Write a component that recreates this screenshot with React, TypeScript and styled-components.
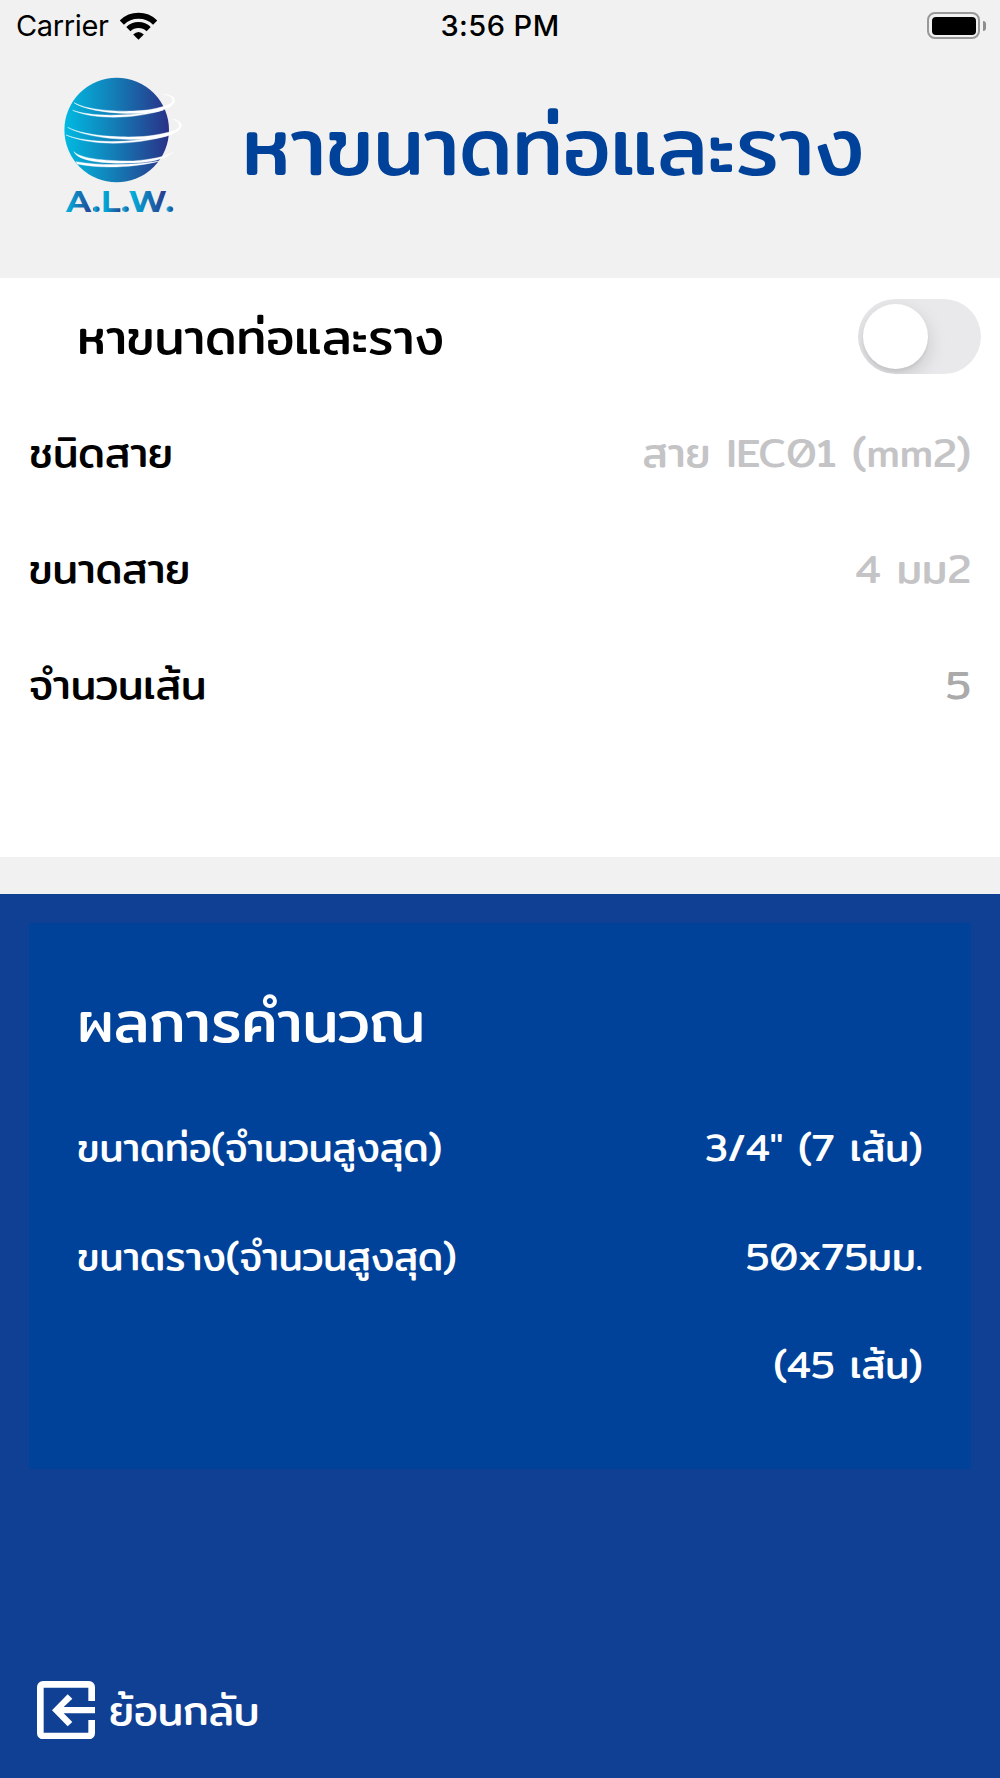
import React, { useState } from "react";
import styled, { createGlobalStyle } from "styled-components";

const colors = {
  surface: "#f1f1f1",
  brand: "#004299",
  backdrop: "#104094",
  placeholder: "#c4c4c6",
  value: "#aaaaaa",
};

const GlobalStyle = createGlobalStyle`
  *, *::before, *::after { box-sizing: border-box; }
  body {
    margin: 0;
    background: ${colors.surface};
    font-family: Mitr, Prompt, Kanit, "Noto Sans Thai", "Noto Sans", sans-serif;
    font-weight: 400;
  }
`;

const Screen = styled.main`
  display: flex;
  flex-direction: column;
  width: 1000px;
  height: 1778px;
  overflow: hidden;
  background: ${colors.surface};
`;

const StatusBar = styled.div`
  display: grid;
  grid-template-columns: 1fr auto 1fr;
  align-items: center;
  height: 46px;
  padding: 4px 14px 0 16px;
  font: 400 29px/42px Inter, "Liberation Sans", sans-serif;
  color: #000;
`;

const Carrier = styled.div`
  display: flex;
  align-items: center;
  gap: 11px;
  letter-spacing: -0.35px;
`;

const Clock = styled.time`
  padding-top: 1px;
  margin-right: 2px;
  font-weight: 500;
  letter-spacing: 0.45px;
`;

const BatterySlot = styled.div`
  display: flex;
  align-items: center;
  justify-content: flex-end;
  gap: 2.5px;
`;

const BatteryCase = styled.div`
  width: 53px;
  height: 27px;
  padding: 2.5px;
  border: 2px solid #999;
  border-radius: 8px;
`;

const BatteryCharge = styled.div`
  height: 100%;
  border-radius: 4px;
  background: #000;
`;

const BatteryTip = styled.div`
  width: 3.5px;
  height: 10px;
  border-radius: 0 4px 4px 0;
  background: #8e8e8e;
`;

const Header = styled.header`
  display: flex;
  align-items: center;
  gap: 55px;
  height: 231.8px;
  padding: 0 0 34.6px 60px;
`;

const Title = styled.h1`
  margin: 0;
  font-size: 82px;
  line-height: 130px;
  font-weight: 400;
  white-space: nowrap;
  color: ${colors.brand};
`;

const Form = styled.section`
  height: 579.7px;
  background: #fff;
`;

const FormRow = styled.div<{ $lead?: boolean }>`
  display: flex;
  align-items: center;
  justify-content: space-between;
  height: 115.95px;
  padding: ${(p) => (p.$lead ? "0 19px 0 77.3px" : "0 29px")};
  font-size: ${(p) => (p.$lead ? 48.3 : 41.06)}px;
  line-height: 66px;
  white-space: nowrap;
  color: #000;
`;

const FieldValue = styled.span<{ $filled?: boolean }>`
  color: ${(p) => (p.$filled ? colors.value : colors.placeholder)};
`;

const Switch = styled.button<{ $on: boolean }>`
  display: flex;
  justify-content: ${(p) => (p.$on ? "flex-end" : "flex-start")};
  align-items: center;
  width: 123.5px;
  height: 75px;
  margin-top: 1.5px;
  padding: 0 5px;
  border: 0;
  border-radius: 38px;
  overflow: hidden;
  background: ${(p) => (p.$on ? "#34c759" : "#e9e9eb")};
`;

const Knob = styled.span`
  width: 65.5px;
  height: 65.5px;
  border-radius: 50%;
  background: #fff;
  box-shadow: 0 7px 19px rgba(0, 0, 0, 0.15), 0 3px 3px rgba(0, 0, 0, 0.05);
`;

const Results = styled.section`
  display: flex;
  flex: 1;
  flex-direction: column;
  justify-content: space-between;
  margin-top: 36.4px;
  padding: 28.8px 29px 35px;
  background: ${colors.backdrop};
  color: #fff;
`;

const Card = styled.div`
  height: 546px;
  padding: 26.4px 48.3px 0;
  background: ${colors.brand};
`;

const CardTitle = styled.h2`
  margin: 0;
  font-size: 58px;
  line-height: 144px;
  font-weight: 400;
`;

const ResultRow = styled.div`
  display: flex;
  justify-content: space-between;
  font-size: 38.65px;
  line-height: 108.7px;
  white-space: nowrap;
`;

const ResultValue = styled.div`
  text-align: right;
`;

const BackButton = styled.button`
  display: flex;
  align-items: center;
  align-self: flex-start;
  gap: 14px;
  padding: 0 0 0 8px;
  border: 0;
  background: none;
  color: inherit;
  font: inherit;
  font-size: 41.06px;
  line-height: 66px;
`;

const LogoMark = styled.svg`
  overflow: visible;
`;

const WifiIcon = () => (
  <svg width="37" height="28" viewBox="-55.5 -83 111 84" fill="none" stroke="#000" strokeWidth="18">
    <path d="M-50-51A71.5 71.5 0 0 1 50-51" />
    <path d="M-30.5-31.5A44 44 0 0 1 30.5-31.5" />
    <path d="M0 0L-16-15.5Q0-31 16-15.5Z" fill="#000" stroke="none" />
  </svg>
);

const letterStops: [number, number][] = [
  [66, 93.5],
  [94.5, 101],
  [103, 123],
  [123.5, 130],
  [130.5, 166],
  [167, 173],
];

const Logo = () => (
  <LogoMark width="127" height="140" viewBox="60 75 127 140">
    <defs>
      <linearGradient id="globe" x1="0" x2="1" y1="0" y2="0">
        <stop offset="0" stopColor="#00bae2" />
        <stop offset="0.5" stopColor="#147ab4" />
        <stop offset="1" stopColor="#2a3187" />
      </linearGradient>
      <linearGradient id="letters" gradientUnits="userSpaceOnUse" x1="66" x2="173" y1="0" y2="0">
        {letterStops.map(([from, to]) => (
          <React.Fragment key={from}>
            <stop offset={(from - 66) / 107} stopColor="#00b4de" />
            <stop offset={(to - 66) / 107} stopColor="#27388c" />
          </React.Fragment>
        ))}
      </linearGradient>
    </defs>
    <circle cx="116.7" cy="130" r="52.3" fill="url(#globe)" />
    <g transform="scale(0.33333)" fill="#fff" stroke="#fff" strokeWidth="1.2">
      <path d="M222 308C270 336 400 338 455 328C500 318 519 312 518 300C516 290 505 286 490 283C512 284 523 291 524 301C525 318 495 331 460 337C400 346 270 340 222 308Z" />
      <path d="M218 331C270 350 380 351 490 330C400 358 280 359 218 331Z" />
      <path d="M203 382C260 412 400 416 460 406C515 396 538 390 538 377C536 366 530 362 518 358C535 360 544 368 544 377C543 393 515 407 470 415C400 425 260 416 203 382Z" />
      <path d="M198 405C260 430 390 431 505 406C400 438 270 437 198 405Z" />
      <path d="M222 455C244 479 330 483 400 483C450 479 500 470 520 456C500 476 450 488 400 489C330 491 236 488 222 455Z" />
      <path d="M228 485C300 498 400 496 480 483C400 504 300 506 232 492Z" />
    </g>
    <text
      x="66"
      y="211.7"
      textLength="108"
      lengthAdjust="spacingAndGlyphs"
      fontFamily="Montserrat, Inter, sans-serif"
      fontWeight="700"
      fontSize="28.5"
      fill="url(#letters)"
    >
      A.L.W.
    </text>
  </LogoMark>
);

const BackIcon = () => (
  <svg width="58" height="58.4" viewBox="111 123 174 175" fill="#fff">
    <path d="M129 123H267a18 18 0 0 1 18 18V183H265V143H131V278H265V240H285V280a18 18 0 0 1-18 18H129a18 18 0 0 1-18-18V141a18 18 0 0 1 18-18Z" />
    <path d="M285 201V220H191L217 246L203 259L156 211L203 163L217 176L191 201Z" />
  </svg>
);

const fields = [
  { label: "ชนิดสาย", value: "สาย IEC01 (mm2)" },
  { label: "ขนาดสาย", value: "4 มม2" },
  { label: "จำนวนเส้น", value: "5", filled: true },
];

const results = [
  { label: "ขนาดท่อ(จำนวนสูงสุด)", lines: ['3/4" (7 เส้น)'] },
  { label: "ขนาดราง(จำนวนสูงสุด)", lines: ["50x75มม.", "(45 เส้น)"] },
];

export default function App() {
  const [on, setOn] = useState(false);
  return (
    <>
      <GlobalStyle />
      <Screen>
        <StatusBar>
          <Carrier>
            Carrier
            <WifiIcon />
          </Carrier>
          <Clock>3:56 PM</Clock>
          <BatterySlot>
            <BatteryCase>
              <BatteryCharge />
            </BatteryCase>
            <BatteryTip />
          </BatterySlot>
        </StatusBar>
        <Header>
          <Logo />
          <Title>หาขนาดท่อและราง</Title>
        </Header>
        <Form>
          <FormRow $lead>
            <span>หาขนาดท่อและราง</span>
            <Switch $on={on} role="switch" aria-checked={on} onClick={() => setOn(!on)}>
              <Knob />
            </Switch>
          </FormRow>
          {fields.map((f) => (
            <FormRow key={f.label}>
              <span>{f.label}</span>
              <FieldValue $filled={f.filled}>{f.value}</FieldValue>
            </FormRow>
          ))}
        </Form>
        <Results>
          <Card>
            <CardTitle>ผลการคำนวณ</CardTitle>
            {results.map((r) => (
              <ResultRow key={r.label}>
                <span>{r.label}</span>
                <ResultValue>
                  {r.lines.map((line) => (
                    <div key={line}>{line}</div>
                  ))}
                </ResultValue>
              </ResultRow>
            ))}
          </Card>
          <BackButton>
            <BackIcon />
            ย้อนกลับ
          </BackButton>
        </Results>
      </Screen>
    </>
  );
}
